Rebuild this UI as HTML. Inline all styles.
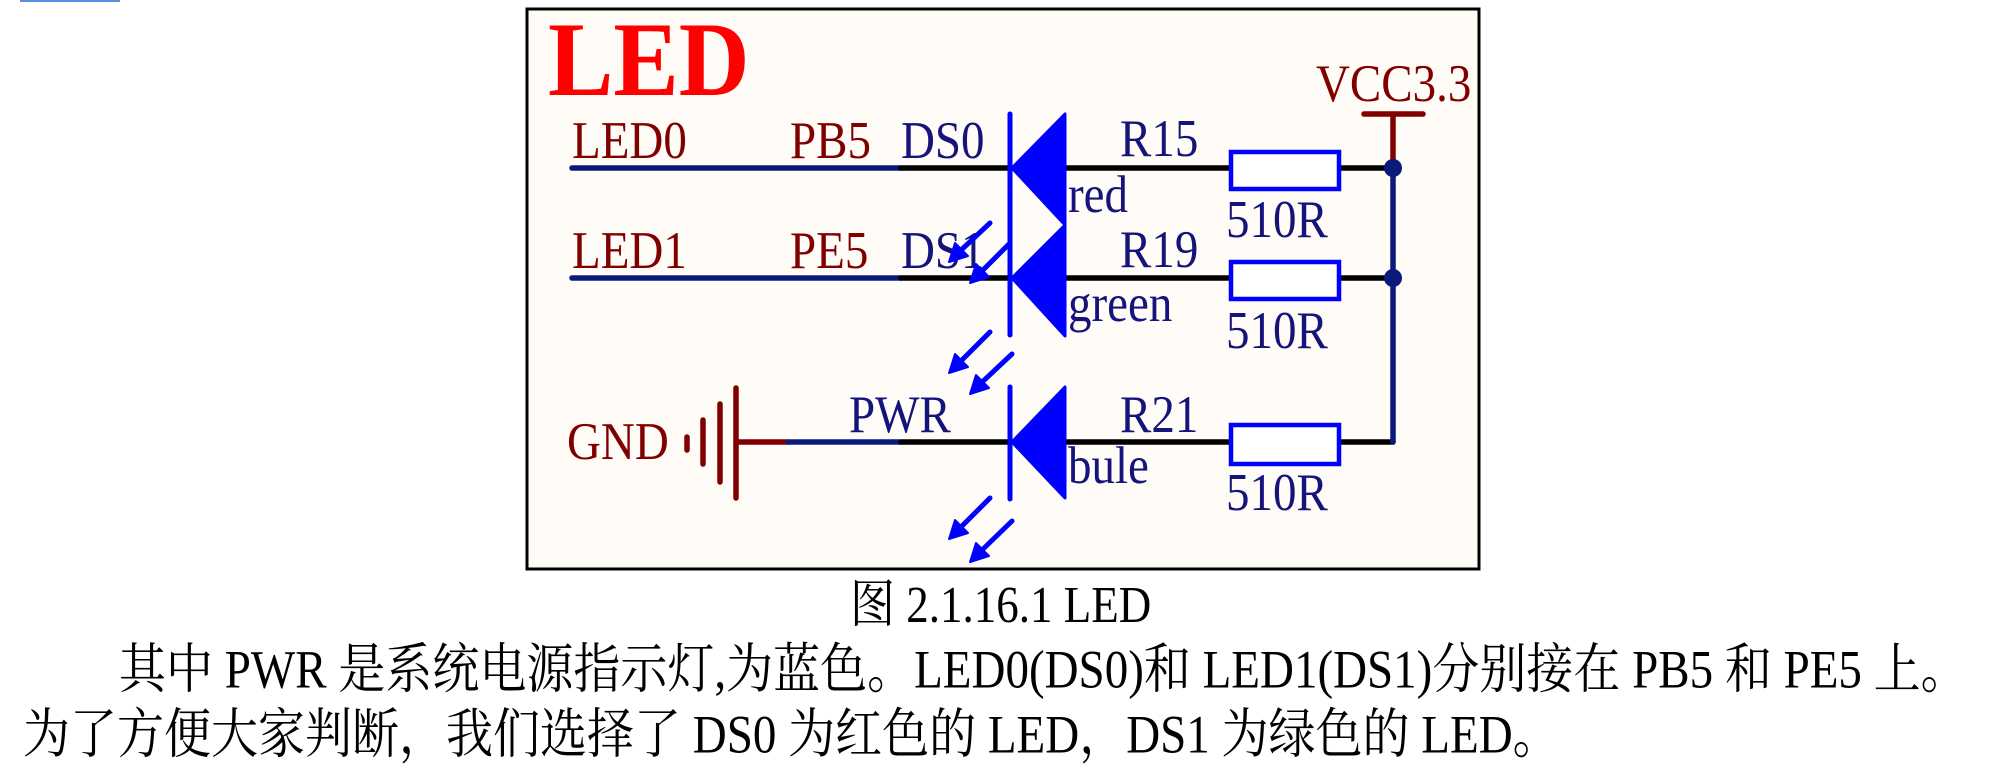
<!DOCTYPE html>
<html><head><meta charset="utf-8"><style>
html,body{margin:0;padding:0;background:#fff;width:1993px;height:782px;overflow:hidden;position:relative}
.t{position:absolute;white-space:nowrap;font-family:"Liberation Serif","Noto Serif CJK SC",serif;color:#000;font-size:46px;line-height:1;transform:scaleY(1.15);transform-origin:0 100%}
</style></head><body>
<div style="position:absolute;left:20px;top:0;width:100px;height:2px;background:#5b8fe0"></div>
<svg width="1993" height="782" style="position:absolute;left:0;top:0" xmlns="http://www.w3.org/2000/svg">
<rect x="527" y="9" width="952" height="560" fill="#fffbf6" stroke="#000" stroke-width="3"/>
<g font-family="Liberation Serif, serif">
<text transform="translate(548,95) scale(1,1.08)" font-size="98" font-weight="bold" fill="#ff0000">LED</text>
<g font-size="47" fill="#800000">
<text transform="translate(1316,101) scale(1,1.12)">VCC3.3</text>
<text transform="translate(572,158) scale(1,1.12)">LED0</text>
<text transform="translate(790,158) scale(1,1.12)">PB5</text>
<text transform="translate(572,268) scale(1,1.12)">LED1</text>
<text transform="translate(790,268) scale(1,1.12)">PE5</text>
<text transform="translate(567,459) scale(1,1.12)">GND</text>
</g>
<g font-size="47" fill="#14147a">
<text transform="translate(901,158) scale(1,1.12)">DS0</text>
<text transform="translate(901,268) scale(1,1.12)">DS1</text>
<text transform="translate(1120,156) scale(1,1.12)">R15</text>
<text transform="translate(1120,267) scale(1,1.12)">R19</text>
<text transform="translate(1120,432) scale(1,1.12)">R21</text>
<text transform="translate(1226,237) scale(1,1.12)">510R</text>
<text transform="translate(1226,348) scale(1,1.12)">510R</text>
<text transform="translate(1226,510) scale(1,1.12)">510R</text>
<text transform="translate(1068,212) scale(1,1.12)">red</text>
<text transform="translate(1068,321) scale(1,1.12)">green</text>
<text transform="translate(1068,483) scale(1,1.12)">bule</text>
<text transform="translate(849,432) scale(1,1.12)">PWR</text>
</g>
</g>
<g stroke-width="5.5" fill="none" stroke-linecap="round">
<line x1="572" y1="168" x2="901" y2="168" stroke="#0a1a7a"/>
<line x1="901" y1="168" x2="1393" y2="168" stroke="#000"/>
<line x1="572" y1="278" x2="901" y2="278" stroke="#0a1a7a"/>
<line x1="901" y1="278" x2="1393" y2="278" stroke="#000"/>
<line x1="736" y1="442" x2="788" y2="442" stroke="#800000"/>
<line x1="788" y1="442" x2="901" y2="442" stroke="#0a1a7a"/>
<line x1="901" y1="442" x2="1393" y2="442" stroke="#000"/>
<line x1="1393" y1="168" x2="1393" y2="442" stroke="#0a1a7a"/>
<line x1="1393" y1="114" x2="1393" y2="168" stroke="#800000"/>
<line x1="1364" y1="114" x2="1423" y2="114" stroke="#800000"/>
<line x1="687" y1="437" x2="687" y2="450" stroke="#800000"/>
<line x1="703" y1="420" x2="703" y2="464" stroke="#800000"/>
<line x1="720" y1="404" x2="720" y2="482" stroke="#800000"/>
<line x1="736" y1="388" x2="736" y2="498" stroke="#800000"/>
</g>
<circle cx="1393" cy="168" r="9" fill="#0a1a7a"/>
<circle cx="1393" cy="278" r="9" fill="#0a1a7a"/>
<g fill="#fff" stroke="#0000ff" stroke-width="4.5">
<rect x="1231" y="152" width="108" height="37"/>
<rect x="1231" y="262" width="108" height="37"/>
<rect x="1231" y="425" width="108" height="39"/>
</g>
<g fill="#0000ff" stroke="#0000ff" stroke-linejoin="round" stroke-width="3">
<polygon points="1012,168 1065,114 1065,225"/>
<polygon points="1012,278 1065,225 1065,336"/>
<polygon points="1012,442 1065,387 1065,498"/>
</g>
<g stroke="#0000ff" stroke-width="5" stroke-linecap="round">
<line x1="1010" y1="114" x2="1010" y2="335"/>
<line x1="1010" y1="387" x2="1010" y2="499"/>
</g>
<g stroke="#0000ff" stroke-width="5" stroke-linecap="round" fill="#0000ff">
<line x1="990" y1="223" x2="958" y2="253"/>
<line x1="1010" y1="243" x2="979" y2="274"/>
<line x1="990" y1="332" x2="958" y2="364"/>
<line x1="1012" y1="354" x2="979" y2="385"/>
<line x1="990" y1="498" x2="958" y2="530"/>
<line x1="1012" y1="521" x2="979" y2="553"/>
</g>
<g fill="#0000ff" stroke="#0000ff" stroke-width="2" stroke-linejoin="round">
<polygon transform="translate(949,262)" points="0,0 19,-6 6,-19"/>
<polygon transform="translate(970,283)" points="0,0 19,-6 6,-19"/>
<polygon transform="translate(949,373)" points="0,0 19,-6 6,-19"/>
<polygon transform="translate(970,394)" points="0,0 19,-6 6,-19"/>
<polygon transform="translate(949,539)" points="0,0 19,-6 6,-19"/>
<polygon transform="translate(970,562)" points="0,0 19,-6 6,-19"/>
</g>
</svg>
<div class="t" style="left:850px;top:586px;font-size:45px">图 2.1.16.1 LED</div>
<div class="t" style="left:119px;top:651px;font-size:47px">其中 PWR 是系统电源指示灯,为蓝色。LED0(DS0)和 LED1(DS1)分别接在 PB5 和 PE5 上。</div>
<div class="t" style="left:23px;top:716px;font-size:47px">为了方便大家判断，我们选择了 DS0 为红色的 LED，DS1 为绿色的 LED。</div>
</body></html>
